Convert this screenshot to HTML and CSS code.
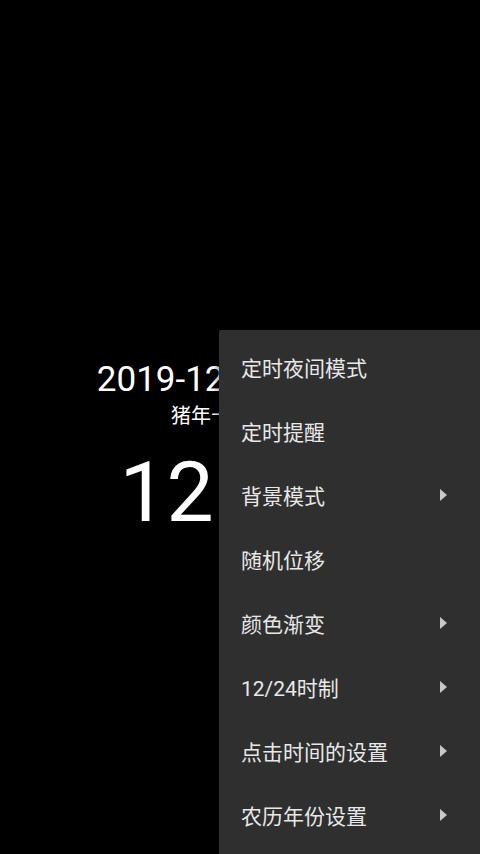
FILE: index.html
```html
<!DOCTYPE html>
<html lang="zh-CN">
<head>
<meta charset="utf-8">
<title>Clock</title>
<link rel="stylesheet" href="styles.css">
</head>
<body>
<div class="screen">
  <div class="clock">
    <div class="date">2019-12-03 星期二</div>
    <div class="lunar">猪年十一月初八</div>
    <div class="time">12:30</div>
  </div>
  <div class="menu">
    <div class="item"><span>定时夜间模式</span></div>
    <div class="item"><span>定时提醒</span></div>
    <div class="item"><span>背景模式</span><i class="arrow"></i></div>
    <div class="item"><span>随机位移</span></div>
    <div class="item"><span>颜色渐变</span><i class="arrow"></i></div>
    <div class="item"><span>12/24时制</span><i class="arrow"></i></div>
    <div class="item"><span>点击时间的设置</span><i class="arrow"></i></div>
    <div class="item"><span>农历年份设置</span><i class="arrow"></i></div>
  </div>
</div>
</body>
</html>
```

FILE: styles.css
```css
html, body {
  margin: 0;
  padding: 0;
  background: #000;
}
.screen {
  position: relative;
  width: 480px;
  height: 854px;
  overflow: hidden;
  background: #000;
  color: #fff;
  font-family: Roboto, "Noto Sans CJK SC", sans-serif;
}
.clock {
  display: flex;
  flex-direction: column;
  align-items: center;
  padding-top: 359px;
}
.date {
  font-size: 35px;
  line-height: 41px;
  white-space: nowrap;
  padding-left: 4px;
}
.lunar {
  margin-top: 2px;
  font-size: 20px;
  line-height: 28px;
  white-space: nowrap;
  padding-left: 2px;
}
.time {
  margin-top: 13px;
  font-size: 84px;
  line-height: 100px;
  white-space: nowrap;
  padding-right: 32px;
}
.menu {
  position: absolute;
  left: 219px;
  top: 330px;
  right: 0;
  bottom: 0;
  background: #2f2f2f;
  border-radius: 2px 0 0 0;
  padding-top: 5px;
  box-shadow: 0 2px 8px rgba(0,0,0,0.6);
}
.item {
  height: 64px;
  display: flex;
  align-items: center;
  justify-content: space-between;
  padding: 0 33px 0 22px;
  font-size: 21px;
  color: #e8e8e8;
}
.arrow {
  width: 0;
  height: 0;
  border-top: 6.5px solid transparent;
  border-bottom: 6.5px solid transparent;
  border-left: 7px solid #c8c8c8;
}
```
